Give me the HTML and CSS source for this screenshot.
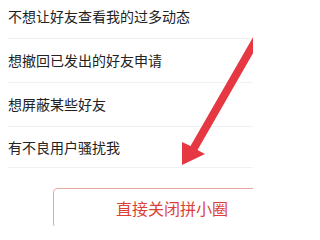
FILE: index.html
```html
<!DOCTYPE html>
<html lang="zh-CN">
<head>
<meta charset="utf-8">
<link rel="stylesheet" href="styles.css">
</head>
<body>
<div class="page">
  <ul class="reasons">
    <li class="row">不想让好友查看我的过多动态</li>
    <li class="row">想撤回已发出的好友申请</li>
    <li class="row">想屏蔽某些好友</li>
    <li class="row row-last">有不良用户骚扰我</li>
  </ul>
  <button class="close-btn">直接关闭拼小圈</button>
  <svg class="arrow" width="253" height="226" viewBox="0 0 253 226">
    <polygon fill="#e63843" points="264,18 190.5,146 182,142 182,165 205,154 197.5,150 271,22"/>
  </svg>
</div>
</body>
</html>
```

FILE: styles.css
```css
html, body {
  margin: 0;
  padding: 0;
  background: #ffffff;
  overflow: hidden;
}

.page {
  position: relative;
  width: 253px;
  height: 226px;
  overflow: hidden;
  font-family: "Noto Sans CJK SC", "Noto Sans", sans-serif;
}

.reasons {
  list-style: none;
  margin: -5.5px 0 0 0;
  padding: 0 0 0 8px;
}

.row {
  height: 44px;
  display: flex;
  align-items: center;
  font-size: 14px;
  color: #222222;
  border-bottom: 1px solid #f1f1f1;
  box-sizing: border-box;
}

.row-last {
  height: 41px;
}

.close-btn {
  display: block;
  margin: 20.5px 0 0 53px;
  width: 238px;
  height: 40px;
  box-sizing: border-box;
  border: 1px solid #e9aaa3;
  border-radius: 4px;
  background: #ffffff;
  font-family: "Noto Sans CJK SC", "Noto Sans", sans-serif;
  font-size: 16px;
  color: #dc4138;
  padding: 0;
  text-align: center;
}

.arrow {
  position: absolute;
  left: 0;
  top: 0;
}
```
